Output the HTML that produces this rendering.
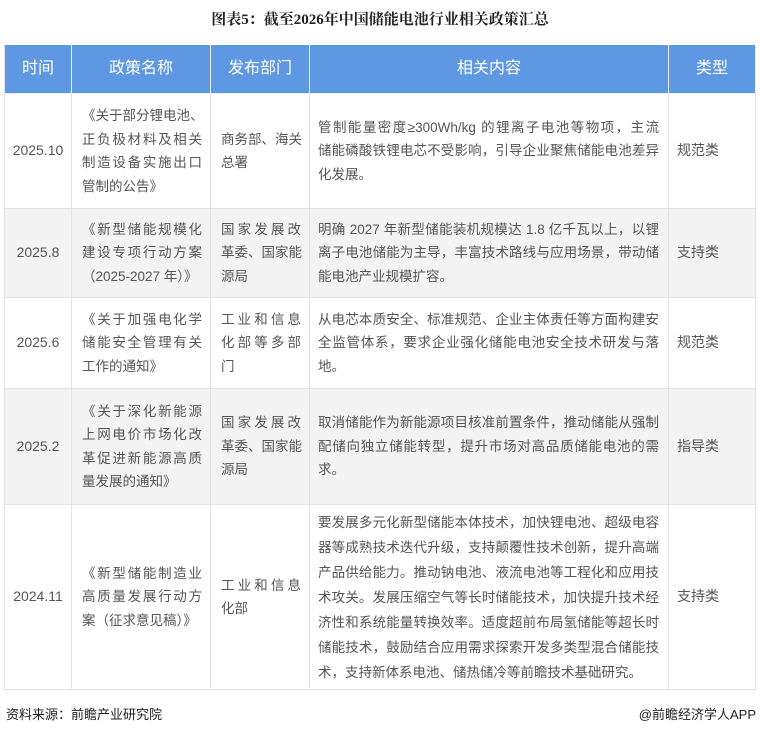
<!DOCTYPE html>
<html><head><meta charset="utf-8"><style>
*{margin:0;padding:0;box-sizing:border-box}
body{width:760px;height:733px;background:#fff;font-family:"Liberation Sans","Noto Sans CJK SC",sans-serif;color:#555;position:relative;overflow:hidden}
.t{position:absolute;top:8px;left:0;width:760px;text-align:center;font-weight:bold;font-size:15px;color:#222;font-family:"Liberation Serif","Noto Serif CJK SC",serif}
.c{position:absolute;display:flex;flex-direction:column;justify-content:center;font-size:14px;line-height:23.5px;border-right:1px solid #e3e3e3;border-bottom:1px solid #e3e3e3;padding:0 8px}
.c span{display:block;white-space:nowrap;text-align:justify;text-align-last:justify;font-size:13.5px}
.c span.n{text-align-last:left}
.h{background:#5e98e2;color:#fff;font-size:16px;align-items:center;border-color:#eaf1fb}
.ctr{align-items:center;text-align:center}
.p2{padding:0 8px 0 10px}
.w{padding:0 9px 0 8px}
.g{background:#f3f3f3}
.f{position:absolute;top:704px;font-size:13px;color:#222}
</style></head><body>
<div class="t">图表5：截至2026年中国储能电池行业相关政策汇总</div>
<div style="position:absolute;left:4px;top:45px;width:1px;height:645px;background:#e3e3e3"></div>

<div class="c h" style="left:5px;top:45px;width:67px;height:49px">时间</div>
<div class="c h" style="left:72px;top:45px;width:139px;height:49px">政策名称</div>
<div class="c h" style="left:211px;top:45px;width:99px;height:49px">发布部门</div>
<div class="c h" style="left:310px;top:45px;width:359px;height:49px">相关内容</div>
<div class="c h" style="left:669px;top:45px;width:87px;height:49px">类型</div>

<div class="c ctr" style="left:5px;top:94px;width:67px;height:115px;padding:0">2025.10</div>
<div class="c p2" style="left:72px;top:94px;width:139px;height:115px"><span>《关于部分锂电池、</span><span>正负极材料及相关</span><span>制造设备实施出口</span><span class="n">管制的公告》</span></div>
<div class="c p2" style="left:211px;top:94px;width:99px;height:115px"><span>商务部、海关</span><span class="n">总署</span></div>
<div class="c w" style="left:310px;top:94px;width:359px;height:115px"><span>管制能量密度≥300Wh/kg 的锂离子电池等物项，主流</span><span>储能磷酸铁锂电芯不受影响，引导企业聚焦储能电池差异</span><span class="n">化发展。</span></div>
<div class="c" style="left:669px;top:94px;width:87px;height:115px">规范类</div>

<div class="c ctr g" style="left:5px;top:209px;width:67px;height:89px;padding:0">2025.8</div>
<div class="c g p2" style="left:72px;top:209px;width:139px;height:89px"><span>《新型储能规模化</span><span>建设专项行动方案</span><span class="n">（2025-2027 年）》</span></div>
<div class="c g p2" style="left:211px;top:209px;width:99px;height:89px"><span>国家发展改</span><span>革委、国家能</span><span class="n">源局</span></div>
<div class="c g w" style="left:310px;top:209px;width:359px;height:89px"><span>明确 2027 年新型储能装机规模达 1.8 亿千瓦以上，以锂</span><span>离子电池储能为主导，丰富技术路线与应用场景，带动储</span><span class="n">能电池产业规模扩容。</span></div>
<div class="c g" style="left:669px;top:209px;width:87px;height:89px">支持类</div>

<div class="c ctr" style="left:5px;top:298px;width:67px;height:91px;padding:0">2025.6</div>
<div class="c p2" style="left:72px;top:298px;width:139px;height:91px"><span>《关于加强电化学</span><span>储能安全管理有关</span><span class="n">工作的通知》</span></div>
<div class="c p2" style="left:211px;top:298px;width:99px;height:91px"><span>工业和信息</span><span>化部等多部</span><span class="n">门</span></div>
<div class="c w" style="left:310px;top:298px;width:359px;height:91px"><span>从电芯本质安全、标准规范、企业主体责任等方面构建安</span><span>全监管体系，要求企业强化储能电池安全技术研发与落</span><span class="n">地。</span></div>
<div class="c" style="left:669px;top:298px;width:87px;height:91px">规范类</div>

<div class="c ctr g" style="left:5px;top:389px;width:67px;height:116px;padding:0">2025.2</div>
<div class="c g p2" style="left:72px;top:389px;width:139px;height:116px"><span>《关于深化新能源</span><span>上网电价市场化改</span><span>革促进新能源高质</span><span class="n">量发展的通知》</span></div>
<div class="c g p2" style="left:211px;top:389px;width:99px;height:116px"><span>国家发展改</span><span>革委、国家能</span><span class="n">源局</span></div>
<div class="c g w" style="left:310px;top:389px;width:359px;height:116px"><span>取消储能作为新能源项目核准前置条件，推动储能从强制</span><span>配储向独立储能转型，提升市场对高品质储能电池的需</span><span class="n">求。</span></div>
<div class="c g" style="left:669px;top:389px;width:87px;height:116px">指导类</div>

<div class="c ctr" style="left:5px;top:505px;width:67px;height:185px;padding:0">2024.11</div>
<div class="c p2" style="left:72px;top:505px;width:139px;height:185px"><span>《新型储能制造业</span><span>高质量发展行动方</span><span class="n">案（征求意见稿）》</span></div>
<div class="c p2" style="left:211px;top:505px;width:99px;height:185px"><span>工业和信息</span><span class="n">化部</span></div>
<div class="c w" style="left:310px;top:505px;width:359px;height:185px;line-height:25px"><span>要发展多元化新型储能本体技术，加快锂电池、超级电容</span><span>器等成熟技术迭代升级，支持颠覆性技术创新，提升高端</span><span>产品供给能力。推动钠电池、液流电池等工程化和应用技</span><span>术攻关。发展压缩空气等长时储能技术，加快提升技术经</span><span>济性和系统能量转换效率。适度超前布局氢储能等超长时</span><span>储能技术，鼓励结合应用需求探索开发多类型混合储能技</span><span class="n">术，支持新体系电池、储热储冷等前瞻技术基础研究。</span></div>
<div class="c" style="left:669px;top:505px;width:87px;height:185px">支持类</div>

<div class="f" style="left:6px">资料来源：前瞻产业研究院</div>
<div class="f" style="right:4px">@前瞻经济学人APP</div>
</body></html>
